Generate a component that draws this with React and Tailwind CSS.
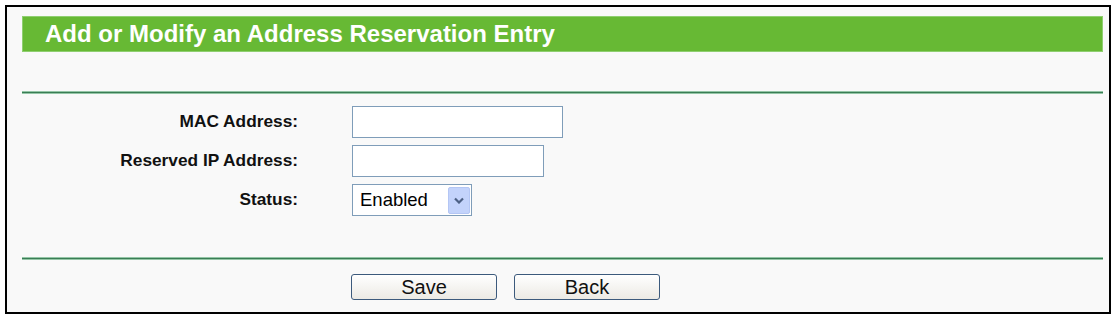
import React from 'react'

const font = { fontFamily: '"Liberation Sans", Arial, sans-serif' }

function Rule() {
  return <div className="h-[3px] bg-[#3a7d55] border-y border-[#94c6a6]" />
}

function TextBox({ width }) {
  return (
    <div className={`h-[32px] ${width} border border-[#7f9db9] bg-white`} />
  )
}

function Chevron() {
  return (
    <svg width="10" height="7" viewBox="0 0 10 7">
      <path d="M1 1.5 L5 5.5 L9 1.5" fill="none" stroke="#4d6185" strokeWidth="2.2" />
    </svg>
  )
}

function Button({ children }) {
  return (
    <button className="w-[146px] h-[26px] rounded-[3px] border border-[#3c5a7c] bg-gradient-to-b from-white to-[#eceae4] text-[20px] leading-none text-[#111] pb-[1px]">
      {children}
    </button>
  )
}

export default function App() {
  const rows = [
    { label: 'MAC Address:', field: <TextBox width="w-[211px]" /> },
    { label: 'Reserved IP Address:', field: <TextBox width="w-[192px]" /> },
    {
      label: 'Status:',
      field: (
        <div className="h-[32px] w-[120px] border border-[#7f9db9] bg-white flex items-center justify-between pl-[7px] pr-[1px]">
          <span className="text-[18.5px] leading-none text-black">Enabled</span>
          <div className="h-[27px] w-[22px] rounded-[2px] bg-[#c3d3fb] border border-[#b4c6f4] flex items-center justify-center">
            <Chevron />
          </div>
        </div>
      ),
    },
  ]

  return (
    <div className="w-[1112px] h-[315px] bg-white pt-[5px] pl-[5px]" style={font}>
      <div className="w-[1106px] h-[309px] border-2 border-black bg-[#f9f9f9] pt-[9px] pl-[15px] pr-[6px]">
        <div className="h-[36px] bg-[#67b934] border border-[#8fcf70] flex items-center pl-[22px]">
          <span className="text-white font-bold text-[24px] leading-none">
            Add or Modify an Address Reservation Entry
          </span>
        </div>

        <div className="mt-[39px]">
          <Rule />
        </div>

        <div className="mt-[12px] flex flex-col gap-[7px]">
          {rows.map((r) => (
            <div key={r.label} className="flex items-center">
              <div className="w-[276px] text-right font-bold text-[17.3px] leading-none text-[#111]">
                {r.label}
              </div>
              <div className="ml-[54px]">{r.field}</div>
            </div>
          ))}
        </div>

        <div className="mt-[41px]">
          <Rule />
        </div>

        <div className="mt-[14px] flex gap-[17px] pl-[329px]">
          <Button>Save</Button>
          <Button>Back</Button>
        </div>
      </div>
    </div>
  )
}
